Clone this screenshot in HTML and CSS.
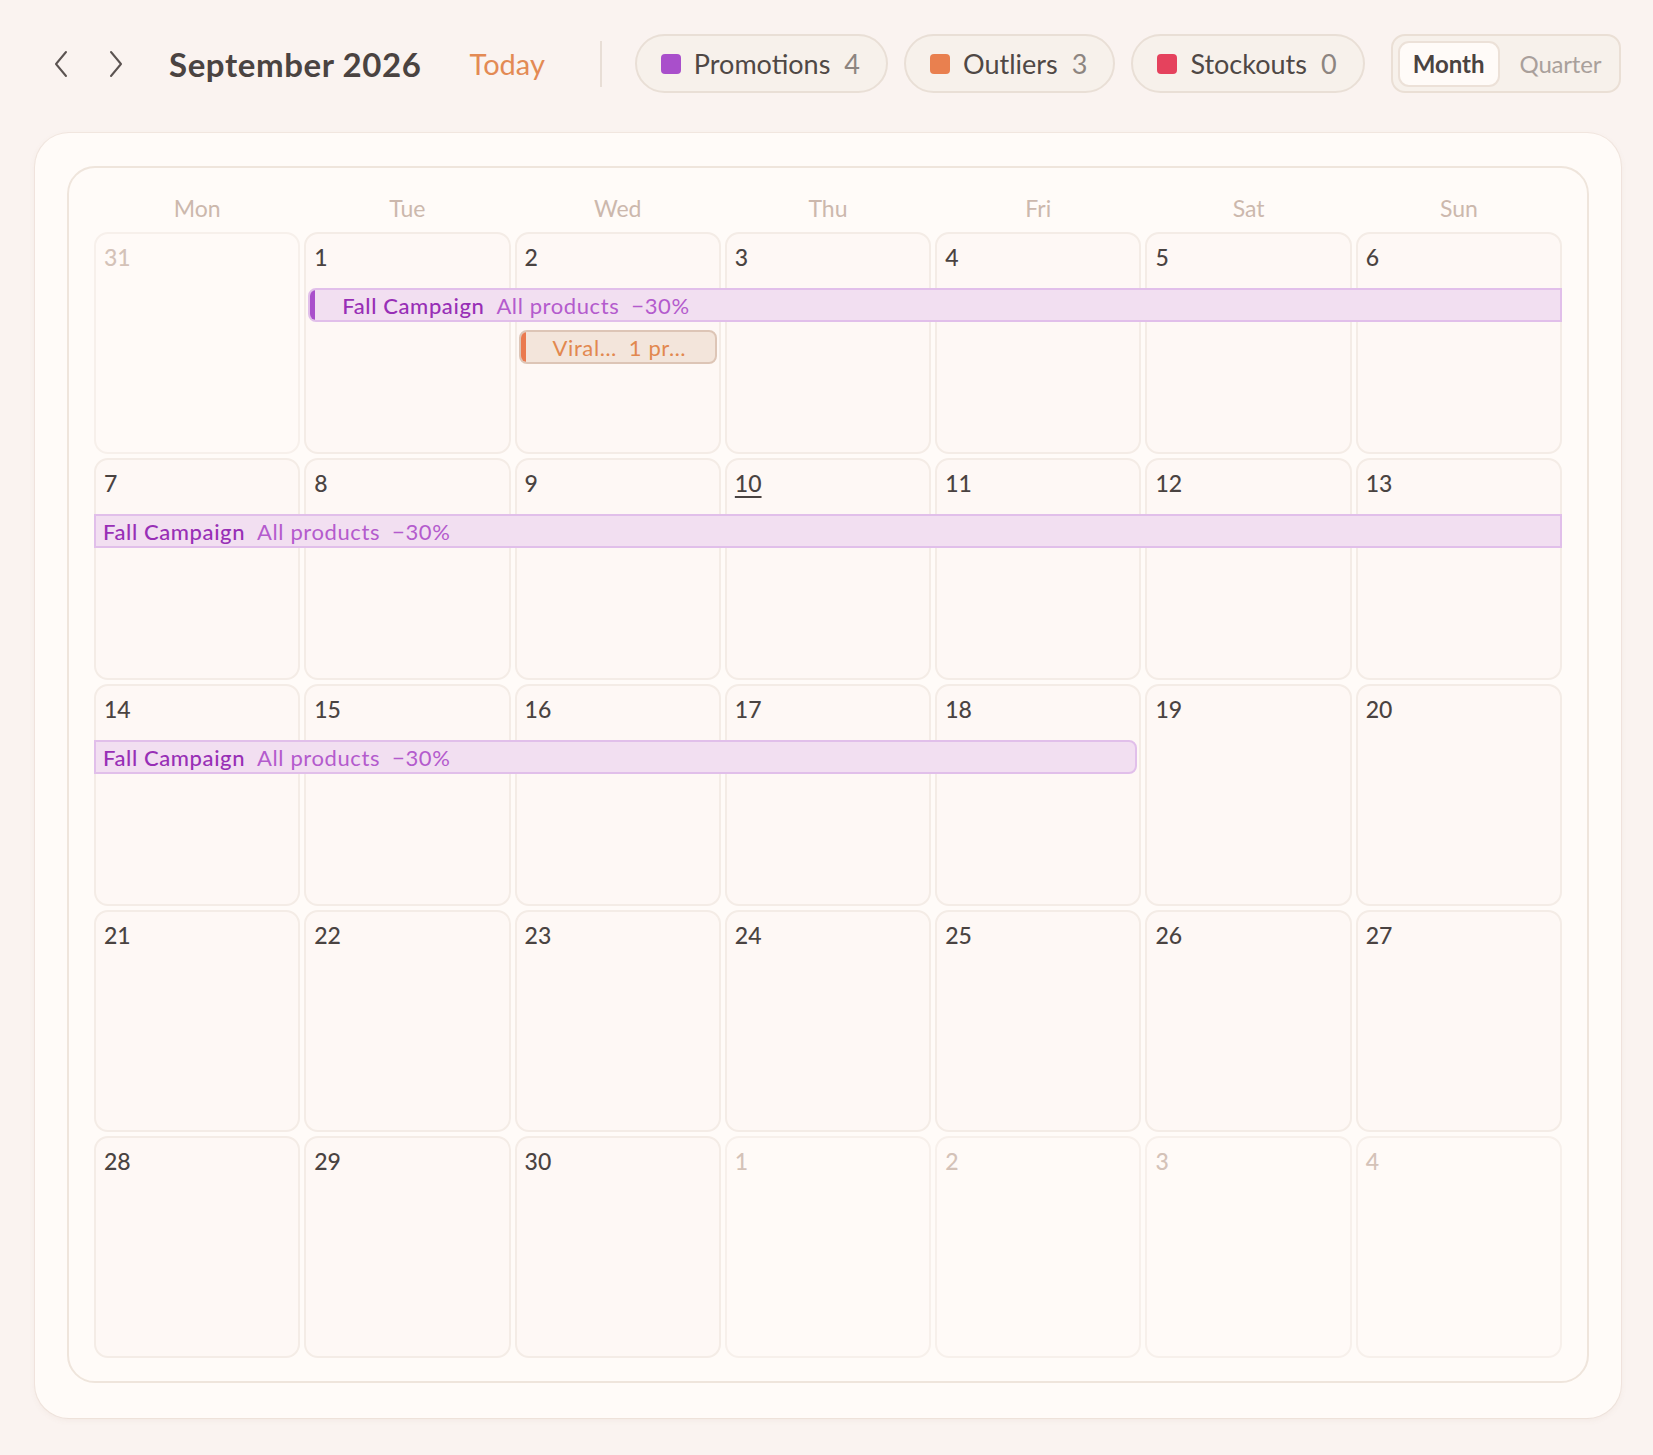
FILE: index.html
```html
<!DOCTYPE html>
<html lang="en">
<head>
<meta charset="utf-8">
<title>Calendar — September 2026</title>
<link rel="stylesheet" href="styles.css">
</head>
<body>
<header class="toolbar">
  <button class="nav-btn" aria-label="Previous month">
    <svg width="16" height="28" viewBox="0 0 16 28"><polyline points="13,2 3,14 13,26" /></svg>
  </button>
  <button class="nav-btn" aria-label="Next month">
    <svg width="16" height="28" viewBox="0 0 16 28"><polyline points="3,2 13,14 3,26" /></svg>
  </button>
  <h1 class="title">September 2026</h1>
  <button class="today">Today</button>
  <span class="divider"></span>
  <div class="filters">
    <button class="chip"><span class="swatch swatch-promo"></span><span class="chip-label">Promotions</span><span class="chip-count">4</span></button>
    <button class="chip"><span class="swatch swatch-outlier"></span><span class="chip-label">Outliers</span><span class="chip-count">3</span></button>
    <button class="chip"><span class="swatch swatch-stock"></span><span class="chip-label">Stockouts</span><span class="chip-count">0</span></button>
  </div>
  <div class="segmented">
    <button class="seg seg-active">Month</button>
    <button class="seg">Quarter</button>
  </div>
</header>

<main class="card">
  <section class="month">
    <div class="weekdays">
      <span>Mon</span><span>Tue</span><span>Wed</span><span>Thu</span><span>Fri</span><span>Sat</span><span>Sun</span>
    </div>

    <div class="weeks">
      <div class="week">
        <div class="day muted c1"><span class="num">31</span></div>
        <div class="day c2"><span class="num">1</span></div>
        <div class="day c3"><span class="num">2</span></div>
        <div class="day c4"><span class="num">3</span></div>
        <div class="day c5"><span class="num">4</span></div>
        <div class="day c6"><span class="num">5</span></div>
        <div class="day c7"><span class="num">6</span></div>
        <div class="event promo starts lane1 from2 to8">
          <span class="ev-title">Fall Campaign</span><span class="ev-meta">All products</span><span class="ev-meta">−30%</span>
        </div>
        <div class="event outlier starts ends lane2 from3 to4">
          <span class="ev-meta">Viral…</span><span class="ev-meta">1 pr…</span>
        </div>
      </div>

      <div class="week">
        <div class="day c1"><span class="num">7</span></div>
        <div class="day c2"><span class="num">8</span></div>
        <div class="day c3"><span class="num">9</span></div>
        <div class="day c4"><span class="num today-num">10</span></div>
        <div class="day c5"><span class="num">11</span></div>
        <div class="day c6"><span class="num">12</span></div>
        <div class="day c7"><span class="num">13</span></div>
        <div class="event promo lane1 from1 to8">
          <span class="ev-title">Fall Campaign</span><span class="ev-meta">All products</span><span class="ev-meta">−30%</span>
        </div>
      </div>

      <div class="week">
        <div class="day c1"><span class="num">14</span></div>
        <div class="day c2"><span class="num">15</span></div>
        <div class="day c3"><span class="num">16</span></div>
        <div class="day c4"><span class="num">17</span></div>
        <div class="day c5"><span class="num">18</span></div>
        <div class="day c6"><span class="num">19</span></div>
        <div class="day c7"><span class="num">20</span></div>
        <div class="event promo ends lane1 from1 to6">
          <span class="ev-title">Fall Campaign</span><span class="ev-meta">All products</span><span class="ev-meta">−30%</span>
        </div>
      </div>

      <div class="week">
        <div class="day c1"><span class="num">21</span></div>
        <div class="day c2"><span class="num">22</span></div>
        <div class="day c3"><span class="num">23</span></div>
        <div class="day c4"><span class="num">24</span></div>
        <div class="day c5"><span class="num">25</span></div>
        <div class="day c6"><span class="num">26</span></div>
        <div class="day c7"><span class="num">27</span></div>
      </div>

      <div class="week">
        <div class="day c1"><span class="num">28</span></div>
        <div class="day c2"><span class="num">29</span></div>
        <div class="day c3"><span class="num">30</span></div>
        <div class="day muted c4"><span class="num">1</span></div>
        <div class="day muted c5"><span class="num">2</span></div>
        <div class="day muted c6"><span class="num">3</span></div>
        <div class="day muted c7"><span class="num">4</span></div>
      </div>
    </div>
  </section>
</main>
</body>
</html>
```

FILE: styles.css
```css
* { box-sizing: border-box; }

html, body {
  margin: 0;
  padding: 0;
}

body {
  background: #faf3f0;
  font-family: "Lato", "Noto Sans", sans-serif;
  color: #4a4341;
  width: 1653px;
  min-height: 1455px;
}

button {
  font: inherit;
  color: inherit;
  background: none;
  border: 0;
  padding: 0;
  cursor: pointer;
}

/* ---------- toolbar ---------- */
.toolbar {
  display: flex;
  align-items: center;
  height: 59px;
  margin: 34px 0 0 41px;
}

.nav-btn {
  width: 40px;
  height: 40px;
  display: flex;
  align-items: center;
  justify-content: center;
}
.nav-btn + .nav-btn { margin-left: 15px; }
.nav-btn svg polyline {
  fill: none;
  stroke: #5b5351;
  stroke-width: 2;
  stroke-linecap: round;
  stroke-linejoin: round;
}

.title {
  margin: 0 0 0 33px;
  font-size: 33px;
  font-weight: 700;
  letter-spacing: 0.6px;
  color: #4a4341;
}

.today {
  margin-left: 48px;
  font-size: 29px;
  color: #e38a54;
}

.divider {
  width: 2px;
  height: 46px;
  background: #e8ded6;
  margin-left: 55px;
}

.filters {
  display: flex;
  gap: 16px;
  margin-left: 33px;
}

.chip {
  display: flex;
  align-items: center;
  height: 59px;
  padding: 0 26px 0 24px;
  border: 2px solid #e9dfd6;
  border-radius: 30px;
  background: #f7f1eb;
  font-size: 27px;
  color: #4f4845;
}
.swatch {
  width: 20px;
  height: 20px;
  border-radius: 4px;
  margin-right: 13px;
}
.swatch-promo { background: #a94fcb; }
.swatch-outlier { background: #e9804f; }
.swatch-stock { background: #e5425d; }
.chip-count {
  margin-left: 14px;
  color: #8d8580;
}

.segmented {
  display: flex;
  align-items: center;
  height: 59px;
  margin-left: 26px;
  padding: 0 4px 0 5px;
  border: 2px solid #eadfd5;
  border-radius: 14px;
  background: #f7f1eb;
}
.seg {
  height: 46px;
  padding: 0 13px;
  font-size: 24px;
  color: #a9a09b;
  border-radius: 11px;
  border: 2px solid transparent;
}
.seg-active {
  background: #fffbf8;
  border-color: #ece1d8;
  color: #4a4341;
  font-weight: 700;
}
.seg + .seg {
  margin-left: 2px;
  padding: 0 12px 0 16px;
  letter-spacing: -0.2px;
}

/* ---------- calendar card ---------- */
.card {
  margin: 40px 0 0 35px;
  width: 1586px;
  height: 1285px;
  padding: 33px 32px 35px;
  background: #fffbf8;
  border-radius: 34px;
  box-shadow: 0 2px 6px rgba(150, 110, 90, 0.08), 0 0 0 1px rgba(235, 222, 212, 0.5);
}

.month {
  height: 100%;
  border: 2px solid #efe5dc;
  border-radius: 28px;
  padding: 0 25px 23px;
}

.weekdays {
  display: grid;
  grid-template-columns: repeat(7, 1fr);
  column-gap: 4px;
  height: 64px;
  padding-top: 26px;
}
.weekdays span {
  text-align: center;
  font-size: 23px;
  line-height: 28px;
  color: #ccb8ad;
}

.weeks {
  display: grid;
  grid-template-rows: repeat(5, 222px);
  row-gap: 4px;
}

.week {
  display: grid;
  grid-template-columns: repeat(7, 1fr);
  grid-template-rows: 56px 34px 8px 34px 1fr;
  column-gap: 4px;
}

.day {
  grid-row: 1 / -1;
  background: #fef8f5;
  border: 2px solid #f4ece6;
  border-radius: 14px;
  padding: 9px 8px 0;
}
.day.muted {
  background: #fffaf7;
  border-color: #f7f0eb;
}
.c1 { grid-column: 1; }
.c2 { grid-column: 2; }
.c3 { grid-column: 3; }
.c4 { grid-column: 4; }
.c5 { grid-column: 5; }
.c6 { grid-column: 6; }
.c7 { grid-column: 7; }

.num {
  font-size: 23px;
  line-height: 28px;
  font-weight: 500;
  color: #4a4341;
}
.muted .num { color: #d4c2b8; }
.today-num {
  text-decoration: underline;
  text-decoration-thickness: 2px;
  text-underline-offset: 4px;
}

/* ---------- events spanning days ---------- */
.event {
  position: relative;
  display: flex;
  align-items: center;
  gap: 12px;
  height: 34px;
  padding-left: 7px;
  font-size: 22px;
  letter-spacing: 0.6px;
  white-space: nowrap;
  overflow: hidden;
  z-index: 1;
}
.event.starts {
  margin-left: 4px;
  padding-left: 32px;
  border-top-left-radius: 8px;
  border-bottom-left-radius: 8px;
}
.event.ends {
  margin-right: 4px;
  border-top-right-radius: 8px;
  border-bottom-right-radius: 8px;
}
.event.starts::before {
  content: "";
  position: absolute;
  left: 0;
  top: 0;
  bottom: 0;
  width: 5px;
}

.lane1 { grid-row: 2; }
.lane2 { grid-row: 4; }
.from1 { grid-column-start: 1; }
.from2 { grid-column-start: 2; }
.from3 { grid-column-start: 3; }
.to4 { grid-column-end: 4; }
.to6 { grid-column-end: 6; }
.to8 { grid-column-end: 8; }

.promo {
  background: #f2dff1;
  border: 2px solid #e1bfea;
}
.promo.starts::before { background: #a94fcb; }
.promo .ev-title { color: #982fb6; font-weight: 500; }
.promo .ev-meta { color: #b45bcd; }

.outlier {
  background: #f3e5db;
  border: 2px solid #ddc5b6;
  gap: 12px;
}
.outlier.starts::before { background: #ea7a4f; }
.outlier .ev-meta { color: #e2884f; }
```
